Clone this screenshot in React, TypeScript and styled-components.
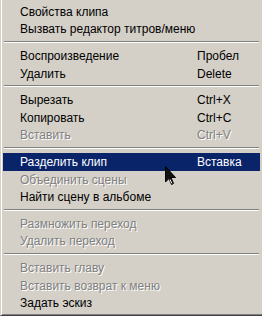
import styled, { createGlobalStyle } from "styled-components";

const GlobalStyle = createGlobalStyle`
  body {
    margin: 0;
    background: #d4d0c8;
  }
`;

const Menu = styled.div`
  position: relative;
  width: 262px;
  height: 316px;
  box-sizing: border-box;
  padding: 3px 2px 0 2px;
  background: #d4d0c8;
  border-left: 1px solid #d4d0c8;
  border-bottom: 1px solid #404040;
  box-shadow: inset 1px 0 #ffffff, inset 0 -1px #808080;
  font-family: "Liberation Sans", Arial, sans-serif;
  font-size: 12px;
  overflow: hidden;
`;

const Item = styled.div<{ $disabled?: boolean; $active?: boolean }>`
  display: grid;
  grid-template-columns: 177px 1fr;
  align-items: center;
  height: 17.6px;
  padding-left: 17px;
  white-space: nowrap;
  color: ${(p) => (p.$active ? "#ffffff" : p.$disabled ? "#808080" : "#000000")};
  background: ${(p) => (p.$active ? "#0a246a" : "transparent")};
  text-shadow: ${(p) => (p.$disabled && !p.$active ? "1px 1px 0 #ffffff" : "none")};
`;

const Separator = styled.div`
  height: 9px;
  padding: 3px 1px 0;
  box-sizing: border-box;

  &::after {
    content: "";
    display: block;
    border-top: 1px solid #808080;
    border-bottom: 1px solid #ffffff;
  }
`;

const Cursor = styled.svg`
  position: absolute;
  left: 164px;
  top: 166px;
  width: 12px;
  height: 20px;
`;

type Entry =
  | { sep: true }
  | { label: string; key?: string; disabled?: boolean; active?: boolean };

const entries: Entry[] = [
  { label: "Свойства клипа" },
  { label: "Вызвать редактор титров/меню" },
  { sep: true },
  { label: "Воспроизведение", key: "Пробел" },
  { label: "Удалить", key: "Delete" },
  { sep: true },
  { label: "Вырезать", key: "Ctrl+X" },
  { label: "Копировать", key: "Ctrl+C" },
  { label: "Вставить", key: "Ctrl+V", disabled: true },
  { sep: true },
  { label: "Разделить клип", key: "Вставка", active: true },
  { label: "Объединить сцены", disabled: true },
  { label: "Найти сцену в альбоме" },
  { sep: true },
  { label: "Размножить переход", disabled: true },
  { label: "Удалить переход", disabled: true },
  { sep: true },
  { label: "Вставить главу", disabled: true },
  { label: "Вставить возврат к меню", disabled: true },
  { label: "Задать эскиз" },
];

function App() {
  return (
    <>
      <GlobalStyle />
      <Menu>
        {entries.map((e, i) =>
          "sep" in e ? (
            <Separator key={i} />
          ) : (
            <Item key={i} $disabled={e.disabled} $active={e.active}>
              <span>{e.label}</span>
              <span>{e.key}</span>
            </Item>
          )
        )}
        <Cursor viewBox="0 0 12 20">
          <path
            d="M0.5 0.5 L0.5 16 L4 12.5 L6.5 18.5 L8.5 17.5 L6 11.5 L10.5 11.5 Z"
            fill="#111"
            stroke="#000"
            strokeWidth="1"
          />
          <path d="M5 13.5 L6.8 17.4" stroke="#fff" strokeWidth="1" />
        </Cursor>
      </Menu>
    </>
  );
}

export default App;
